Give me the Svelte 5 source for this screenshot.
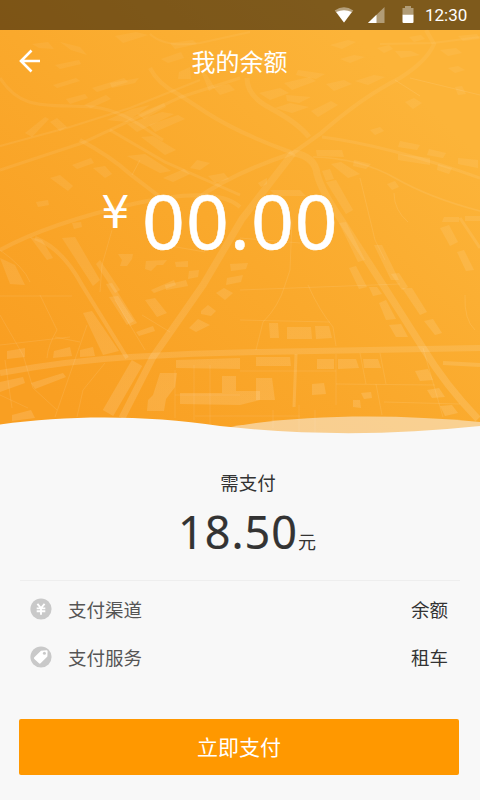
<script>
  export let balance = '00.00'
  export let due = '18.50'

  const rows = [
    { id: 'channel', label: '支付渠道', value: '余额' },
    { id: 'service', label: '支付服务', value: '租车' },
  ]

  // d = path, w = stroke width
  const roads = [
    { d: 'M0 373 Q65 361 130 357 T260 352 L480 348', w: 6 },
    { d: 'M35 238 Q62 248 82 285 L127 358', w: 4 },
    { d: 'M122 418 L153 357 L203 285 L242 219 L293 153', w: 7 },
    { d: 'M150 68 Q158 84 178 94 L207 113 Q240 134 293 153', w: 4 },
    { d: 'M293 153 L320 134 Q362 97 400 78 Q427 61 434 44 L426 30', w: 4 },
    { d: 'M247 78 Q247 96 270 108 Q298 123 309 137', w: 5 },
    { d: 'M195 200 Q230 174 293 153', w: 4 },
    { d: 'M293 153 Q315 156 317 174 Q322 192 342 221 L383 285 L423 348 Q446 386 478 419', w: 7 },
    { d: 'M322 137 Q390 146 480 178', w: 3 },
    { d: 'M313 157 Q360 158 395 178 T480 211', w: 1.5 },
    { d: 'M0 78 C22 112 48 104 93 107 C125 111 140 126 163 140', w: 3 },
    { d: 'M0 170 L82 143 L181 97 L240 78', w: 3 },
    { d: 'M0 146 L70 127 L130 108 L200 80', w: 2 },
    { d: 'M80 140 Q110 156 130 174 L160 197', w: 4 },
    { d: 'M110 130 L165 162 L240 195', w: 3 },
    { d: 'M0 250 Q50 223 133 204 T240 207', w: 4 },
    { d: 'M137 363 L108 413', w: 12 },
    { d: 'M150 34 Q165 48 200 43 L250 32', w: 2 },
    { d: 'M380 44 L433 43 L480 37', w: 2 },
    { d: 'M443 363 L480 365', w: 4 },
    { d: 'M296 354 L294 407', w: 3 },
    { d: 'M460 218 L480 248', w: 3 },
  ]

  // field edges and footpaths
  const lanes = [
    'M0 250 Q24 267 30 282', 'M40 295 L57 330 Q48 345 47 358', 'M0 315 L23 355 L33 388 L57 410',
    'M87 325 L55 417', 'M105 363 L83 390 L77 417', 'M285 285 Q279 306 263 322 L256 350',
    'M308 285 Q319 310 333 327 L336 346', 'M240 371 L336 371', 'M336 354 L336 405', 'M336 384 L435 385',
    'M360 353 L366 384', 'M380 353 L386 384', 'M376 384 L382 415', 'M423 348 L443 417',
    'M384 402 L460 404', 'M175 370 V418', 'M194 365 V420', 'M210 365 V424', 'M175 395 H240',
    'M195 416 H300', 'M273 410 V428', 'M299 405 V432', 'M315 410 V432', 'M360 178 L375 240 L385 260',
    'M394 193 Q394 210 408 222', 'M465 295 Q464 320 475 330', 'M292 220 L290 270 L285 285',
    'M140 160 L132 175', 'M112 230 L102 265 L100 292', 'M0 296 H72', 'M115 300 L145 350',
    'M0 345 L70 337', 'M55 337 L80 342', 'M0 395 L28 408', 'M142 315 L170 332',
    'M395 80 L420 96', 'M410 78 L480 95', 'M240 238 L300 243', 'M165 245 L205 252',
    'M240 290 L400 284', 'M240 320 L330 322', 'M5 360 L12 408',
  ]

  const blocks = [
    // south west
    '83,313 92,311 119,351 103,355', '7,351 25,348 25,357 7,359', '54,351 70,347 72,356 53,358',
    '80,350 93,347 95,356 80,357', '0,382 23,377 25,383 0,392', '31,383 63,373 66,377 35,389',
    '12,415 31,410 35,418 12,421', '106,284 112,283 137,323 130,326', '109,297 118,296 134,321 127,325',
    '145,300 155,298 167,313 157,317', '136,332 153,326 155,331 139,336', '189,328 198,319 210,325 196,332',
    '201,311 208,305 216,311 211,316 201,314', '216,293 224,288 233,293 225,300', '151,290 174,280 176,285 154,293',
    // south blocks along the main road
    '176,360 240,358 240,369 176,368', '160,373 177,373 175,387 166,399 164,411 147,411 148,400 153,395',
    '180,393 222,393 222,376 236,376 236,391 260,391 260,400 240,405 180,404',
    '256,357 290,357 291,366 256,366', '256,378 272,378 275,400 256,400',
    '269,323 278,323 279,338 270,338', '287,327 311,327 312,339 287,339', '315,326 329,326 332,338 316,339',
    '317,359 334,359 334,369 317,369', '338,359 356,359 359,368 338,369', '363,359 378,359 381,368 364,368',
    '312,384 324,383 326,394 312,395', '353,400 360,400 361,408 353,407', '361,393 371,392 372,398 364,399',
    '415,371 428,369 433,380 420,381', '427,390 439,388 445,397 432,398', '440,406 452,405 458,413 445,416',
    '389,325 401,324 408,337 396,337', '369,287 377,287 382,294 373,296', '379,303 386,300 396,319 386,320',
    '402,288 412,288 427,312 420,315', '424,321 433,319 442,333 435,335',
    // middle
    '322,171 330,169 334,179 326,181', '326,182 336,180 353,210 346,214', '339,223 346,222 365,260 358,262',
    '374,245 382,245 399,280 391,280', '349,268 356,266 367,287 359,289', '391,274 399,273 408,287 402,290',
    '331,164 341,162 360,174 348,178', '316,150 342,150 344,157 317,156', '354,160 371,164 366,169 353,166',
    '387,184 395,181 399,187 392,190', '398,154 430,158 430,165 398,160', '438,164 452,168 449,174 437,170',
    '400,141 420,145 417,150 398,147', '429,149 446,153 443,158 427,155', '458,158 478,160 478,168 458,164',
    '444,217 459,217 459,222 442,222', '465,216 480,216 480,221 465,221', '440,228 449,225 458,242 450,246',
    '457,252 464,250 474,270 466,271', '118,254 133,254 132,259 127,266 120,266 122,260',
    '146,261 167,260 163,265 157,265 151,271 145,269', '175,262 188,261 188,267 176,267',
    '189,271 199,270 198,277 188,279', '165,285 186,280 188,286 166,290', '96,264 100,260 120,290 115,293',
    '62,238 75,237 100,280 93,286', '0,258 15,265 25,285 10,284', '30,237 42,240 53,258 47,260',
    '72,223 81,222 82,227 74,229', '230,264 248,263 246,269 231,271', '227,278 243,275 241,282 226,285',
    '36,202 48,200 49,205 38,207', '50,178 60,175 73,186 68,191', '72,165 91,158 94,163 77,169',
    '93,168 105,166 112,174 105,178', '127,156 145,154 171,171 160,173', '163,178 184,169 190,174 173,182',
    '208,176 224,173 229,179 215,183', '197,160 210,163 200,170 190,168', '258,183 267,178 267,184 261,187',
    '270,190 300,190 306,196 276,196', '141,137 153,136 176,150 165,155',
    // north
    '66,99 85,94 88,98 70,104', '84,105 106,95 111,99 91,108', '110,83 139,78 135,83 112,88', '92,88 124,78 128,82 97,92',
    '107,120 132,109 150,105 127,122', '137,114 164,103 166,107 144,119', '127,124 162,112 174,114 137,132',
    '149,125 178,115 185,119 155,132', '50,122 57,118 67,127 60,131', '25,133 45,117 49,119 32,137',
    '53,85 76,78 80,81 57,88', '32,44 48,42 54,49 39,48', '60,42 80,47 87,55 71,50', '55,65 79,60 81,64 60,69',
    '161,59 181,52 184,58 168,63', '179,72 190,67 191,79 178,79', '200,69 207,75 215,88 209,91',
    '170,43 193,40 197,44 175,49', '115,36 136,32 148,35 123,43', '213,87 229,84 235,90 220,95',
    '252,60 266,57 264,63 250,66', '259,93 280,88 289,93 270,100', '284,83 309,77 316,81 292,90',
    '286,95 311,97 299,103 287,101', '298,70 325,74 316,79 296,75', '326,84 344,80 352,84 334,91',
    '275,108 290,103 309,107 292,113', '311,111 331,101 338,105 318,117', '355,81 374,75 385,77 368,85',
    '377,48 389,45 393,49 384,53', '395,51 411,51 420,55 401,58', '405,102 414,98 422,103 413,109',
    '440,50 456,48 462,53 448,56', '448,68 458,66 465,70 455,73', '455,87 462,86 466,94 458,95',
    '409,37 421,35 425,39 414,42', '340,59 354,55 365,57 350,63', '330,45 348,40 356,42 342,49',
    '370,130 380,127 384,131 375,135', '458,36 477,34 480,39 463,41',
  ]
</script>

<main class="screen">
  <section class="hero">
    <svg class="map" viewBox="0 0 480 440" aria-hidden="true">
      <defs>
        <linearGradient id="ground" gradientUnits="userSpaceOnUse" x1="60" y1="400" x2="380" y2="60">
          <stop offset="0" stop-color="#f99f22" />
          <stop offset="0.5" stop-color="#faa92c" />
          <stop offset="1" stop-color="#fcb439" />
        </linearGradient>
        <linearGradient id="fade" gradientUnits="userSpaceOnUse" x1="0" y1="30" x2="0" y2="400">
          <stop offset="0" stop-color="#fff" stop-opacity="0.05" />
          <stop offset="0.5" stop-color="#fff" stop-opacity="0.08" />
          <stop offset="1" stop-color="#fff" stop-opacity="0.13" />
        </linearGradient>
      </defs>
      <rect width="480" height="440" fill="url(#ground)" />
      <g fill="none" stroke="url(#fade)">
        {#each roads as r}
          <path d={r.d} stroke-width={r.w} />
        {/each}
      </g>
      <g fill="none" stroke="#fff" stroke-opacity="0.09">
        {#each lanes as d}
          <path {d} />
        {/each}
      </g>
      <g fill="url(#fade)">
        {#each blocks as points}
          <polygon {points} />
        {/each}
      </g>
      <path d="M225 428 C290 415 390 413 480 422 V440 H225 Z" fill="#f8f8f8" fill-opacity="0.5" />
      <path d="M0 424.5 C70 415 145 415 220 426 C310 436 395 435 480 426 V440 H0 Z" fill="#f8f8f8" />
    </svg>

    <div class="status">
      <svg class="wifi" width="20" height="16" viewBox="0 0 20 16">
        <path d="M0.7 3.4 Q10 -2.8 19.3 3.4 L10 15.4 Z" fill="#fff" fill-opacity="0.42" />
        <path d="M2.2 5 Q10 1.3 17.8 5 L10 15.4 Z" fill="#fff" />
      </svg>
      <svg class="signal" width="17" height="16" viewBox="0 0 17 16">
        <path d="M0 16 L16.5 0 V16 Z" fill="#fff" fill-opacity="0.4" />
        <path d="M0 16 L8.5 7.8 V16 Z" fill="#fff" />
      </svg>
      <svg class="battery" width="12" height="17" viewBox="0 0 12 17">
        <path d="M0.5 2 H3 V0 H9 V2 H11.5 V9 H0.5 Z" fill="#fff" fill-opacity="0.4" />
        <path d="M0.5 8.7 H11.5 V16 Q11.5 17 10.5 17 H1.5 Q0.5 17 0.5 16 Z" fill="#fff" />
      </svg>
      <span class="clock">12:30</span>
    </div>

    <header class="bar">
      <button class="back" aria-label="返回">
        <svg width="22" height="24" viewBox="0 0 22 24">
          <path d="M12.5 1.5 L2 12 L12.5 22.5 M2 12 H21" fill="none" stroke="#fff" stroke-width="2.6" />
        </svg>
      </button>
      <h1>我的余额</h1>
    </header>

    <div class="balance">
      <span class="yen">¥</span>
      <span class="amount">{balance}</span>
    </div>
  </section>

  <section class="due">
    <p class="due-label">需支付</p>
    <p class="due-sum"><span class="sum">{due}</span><span class="unit">元</span></p>
  </section>

  <section class="rows">
    {#each rows as row}
      <div class="row">
        <svg class="icon" width="22" height="22" viewBox="0 0 22 22">
          <circle cx="11" cy="11" r="10.6" fill="#c9c9c9" />
          {#if row.id === 'channel'}
            <path d="M7.4 5.8 L11 10 L14.6 5.8 M6.7 10.4 H15.3 M6.7 13.3 H15.3 M11 10 V16.7" fill="none" stroke="#fff" stroke-width="1.9" />
          {:else}
            <path d="M11 4.7 L16.4 4.2 Q17.6 4.1 17.6 5.3 L17.4 10.6 L10.6 17.3 Q9.8 18.1 9 17.3 L4.3 12.9 Q3.5 12 4.3 11.2 Z" fill="#fff" />
            <circle cx="14.4" cy="7.3" r="1.5" fill="#c9c9c9" />
          {/if}
        </svg>
        <span class="row-label">{row.label}</span>
        <span class="row-value">{row.value}</span>
      </div>
    {/each}
  </section>

  <button class="pay">立即支付</button>
</main>

<style>
  :global(body) {
    margin: 0;
    background: #f8f8f8;
  }

  .screen {
    display: flex;
    flex-direction: column;
    width: 480px;
    height: 800px;
    overflow: hidden;
    background: #f8f8f8;
    color: #333;
    font-family: 'Noto Sans', 'Noto Sans CJK SC', sans-serif;
  }

  h1, p { margin: 0; font-weight: 400; }
  button { border: 0; padding: 0; font-family: inherit; }
  svg { display: block; }

  .hero {
    position: relative;
    height: 440px;
    flex: none;
    color: #fff;
  }

  .map {
    position: absolute;
    inset: 0;
    width: 480px;
    height: 440px;
  }

  .status {
    position: relative;
    display: flex;
    align-items: center;
    box-sizing: border-box;
    height: 30px;
    padding-left: 334px;
    background: rgba(0, 0, 0, 0.5);
  }
  .signal { margin-left: 14px; }
  .battery { margin-left: 17px; margin-top: -1px; }
  .clock {
    margin-left: 11px;
    font-family: Roboto, sans-serif;
    font-size: 17px;
    line-height: 30px;
  }

  .bar {
    position: relative;
    display: grid;
    grid-template-columns: 60px 1fr 60px;
    align-items: center;
    height: 62px;
  }
  .back {
    padding-left: 19px;
    background: none;
  }
  h1 {
    padding: 0 1px 1px 0;
    font-family: 'Noto Sans CJK SC', sans-serif;
    font-size: 24px;
    line-height: 35px;
    text-align: center;
  }

  .balance {
    position: relative;
    display: flex;
    align-items: flex-start;
    padding: 78px 0 0 101px;
  }
  .yen {
    width: 41px;
    font-family: 'DejaVu Sans', sans-serif;
    font-size: 45px;
    line-height: 85px;
  }
  .amount {
    font-size: 75px;
    line-height: 100px;
    letter-spacing: 1px;
    -webkit-text-stroke: 0.5px #fff;
  }

  .due {
    display: flex;
    flex-direction: column;
    align-items: center;
    height: 140px;
    flex: none;
  }
  .due-label {
    padding: 28px 0 0 16px;
    font-size: 18.5px;
    line-height: 30px;
  }
  .due-sum {
    padding: 4px 0 0 14px;
    line-height: 60px;
  }
  .sum {
    font-size: 45px;
    letter-spacing: 1px;
    -webkit-text-stroke: 0.2px #333;
  }
  .unit { font-size: 18px; }

  .rows {
    margin: 0 20px;
    padding: 4px 12px 0 10px;
    border-top: 1px solid #eee;
  }
  .row {
    display: flex;
    align-items: center;
    height: 48px;
  }
  .row-label {
    flex: 1;
    margin-left: 16px;
    font-size: 18.5px;
    color: #555;
  }
  .row-value { font-size: 18.5px; }

  .pay {
    height: 56px;
    margin: auto 21px 25px 19px;
    padding: 0 0 2px;
    border-radius: 2px;
    background: #ff9800;
    color: #fff;
    font-size: 21px;
  }
</style>
